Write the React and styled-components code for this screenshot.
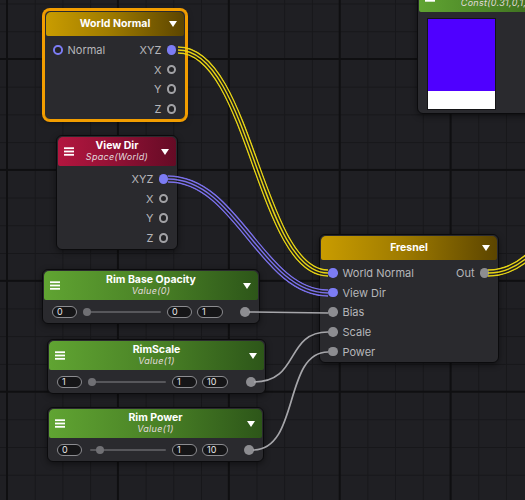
import React from "react";
import styled, { createGlobalStyle, css } from "styled-components";

const GlobalStyle = createGlobalStyle`
  html, body {
    margin: 0;
    padding: 0;
    background: #1f1f23;
  }
  body {
    font-family: Inter, "Noto Sans", sans-serif;
  }
`;

const Canvas = styled.div`
  position: relative;
  width: 525px;
  height: 500px;
  overflow: hidden;
  background-color: #1f1f23;
  background-image: linear-gradient(to right, #0f0f11 2px, transparent 2px),
    linear-gradient(to bottom, #0f0f11 2px, transparent 2px),
    linear-gradient(to right, #17171a 1px, transparent 1px),
    linear-gradient(to bottom, #17171a 1px, transparent 1px);
  background-size: 110.9px 110.9px, 110.9px 110.9px, 27.725px 27.725px,
    27.725px 27.725px;
  background-position: 6px 0, 0 58px, 7px 0, 0 3.5px;
`;

const Node = styled.div`
  position: absolute;
  z-index: 1;
  left: ${(p) => p.$x}px;
  top: ${(p) => p.$y}px;
  width: ${(p) => p.$w}px;
  box-sizing: border-box;
  background: #2a2a2e;
  border: 1px solid ${(p) => (p.$selected ? "#f29d00" : "#0b0b0d")};
  border-radius: 6px;
  box-shadow: ${(p) =>
    p.$selected
      ? "0 0 0 2px #f29d00, 0 2px 6px rgba(0,0,0,0.5)"
      : "0 2px 6px rgba(0,0,0,0.45)"};
`;

const headerTones = {
  gold: "linear-gradient(90deg, #c99c00 0%, #a07c00 45%, #5c4500 100%)",
  crimson: "linear-gradient(90deg, #b3163f 0%, #8f1134 50%, #650b25 100%)",
  green: "linear-gradient(90deg, #60a432 0%, #4a8226 50%, #2d5619 100%)",
};

const Header = styled.div`
  display: grid;
  grid-template-columns: 12px 1fr 12px;
  align-items: center;
  height: ${(p) => (p.$tall ? 29 : 24)}px;
  margin: 1px;
  padding: 0 5px 0 5px;
  border-radius: 5px 5px 2px 2px;
  background: ${(p) => headerTones[p.$tone]};
  color: #ffffff;
`;

const TitleBox = styled.div`
  display: flex;
  flex-direction: column;
  align-items: center;
  line-height: 1.15;
  white-space: nowrap;
`;

const Title = styled.span`
  font-size: 10.5px;
  font-weight: 700;
`;

const Sub = styled.span`
  font-size: 9px;
  font-style: italic;
  color: #e2dadd;
  letter-spacing: 0.3px;
`;

const Arrow = styled.span`
  justify-self: center;
  width: 0;
  height: 0;
  border-left: 4.5px solid transparent;
  border-right: 4.5px solid transparent;
  border-top: 6px solid #ffffff;
`;

const MenuIcon = () => (
  <svg width="10" height="9" viewBox="0 0 10 9" style={{ justifySelf: "center" }}>
    <rect x="0" y="0.3" width="10" height="1.8" fill="#fff" />
    <rect x="0" y="3.6" width="10" height="1.8" fill="#fff" />
    <rect x="0" y="6.9" width="10" height="1.8" fill="#fff" />
  </svg>
);

const Body = styled.div`
  display: flex;
  flex-direction: column;
  padding: ${(p) => p.$pad || "2px 0"};
`;

const Row = styled.div`
  display: flex;
  align-items: center;
  justify-content: space-between;
  height: 19.7px;
  padding: 0 9px 0 8px;
  font-size: 11px;
  color: #b6b6ba;
`;

const Side = styled.div`
  display: flex;
  align-items: center;
  gap: 5px;
  margin-left: ${(p) => (p.$end ? "auto" : 0)};
`;

const portColors = { vec: "#7c7cf4", float: "#8d8d91" };

const Port = styled.span`
  flex: none;
  width: 9.5px;
  height: 9.5px;
  box-sizing: border-box;
  border-radius: 50%;
  ${(p) =>
    p.$open
      ? css`
          border: 2px solid ${p.$kind === "vec" ? portColors.vec : "#a2a2a6"};
          background: #242427;
        `
      : css`
          background: ${portColors[p.$kind]};
        `}
`;

const ValueRow = styled.div`
  display: flex;
  align-items: center;
  height: 22px;
  padding: 0 9.5px 0 9px;
`;

const Field = styled.span`
  flex: none;
  width: ${(p) => p.$w || 25}px;
  height: 12px;
  box-sizing: border-box;
  margin-left: ${(p) => p.$gap || 0}px;
  padding-left: 4px;
  border: 1px solid #8c8c90;
  border-radius: 6px;
  background: #151517;
  color: #e8e8e8;
  font-size: 9px;
  line-height: 10px;
`;

const Slider = styled.span`
  position: relative;
  flex: none;
  width: 78px;
  height: 10px;
  margin: 0 6px;
  &::before {
    content: "";
    position: absolute;
    left: 2px;
    right: 0;
    top: 4px;
    height: 2px;
    background: #57575b;
    border-radius: 1px;
  }
`;

const Knob = styled.span`
  position: absolute;
  top: 1px;
  width: 8px;
  height: 8px;
  border-radius: 50%;
  background: #707074;
`;

const OutPort = styled(Port)`
  margin-left: auto;
  width: 10px;
  height: 10px;
`;

const Swatch = styled.div`
  display: flex;
  flex-direction: column;
  width: 69px;
  height: 92px;
  box-sizing: border-box;
  border: 1px solid #141416;
`;

const SwatchColor = styled.div`
  flex: ${(p) => (p.$h ? "none" : 1)};
  height: ${(p) => (p.$h ? `${p.$h}px` : "auto")};
  background: ${(p) => p.$c};
`;

const WireLayer = styled.svg`
  position: absolute;
  left: 0;
  top: 0;
  z-index: 2;
  pointer-events: none;
`;

const Wire = ({ id, d, color, triple }) =>
  triple ? (
    <g>
      <mask id={id} maskUnits="userSpaceOnUse" x="0" y="0" width="525" height="500">
        <path d={d} fill="none" stroke="#fff" strokeWidth="7.4" />
        <path d={d} fill="none" stroke="#000" strokeWidth="4.6" />
        <path d={d} fill="none" stroke="#fff" strokeWidth="1.4" />
      </mask>
      <path d={d} fill="none" stroke={color} strokeWidth="8" mask={`url(#${id})`} />
    </g>
  ) : (
    <path d={d} fill="none" stroke={color} strokeWidth="1.7" />
  );

const YELLOW = "#e6d314";
const PURPLE = "#7a70ea";
const GRAY = "#a6a6aa";

const wires = [
  { id: "w1", d: "M 178 50 C 250 50, 260 273, 328 273", color: YELLOW, triple: true },
  { id: "w2", d: "M 168 179 C 237 179, 262 293, 328 293", color: PURPLE, triple: true },
  { id: "w3", d: "M 249 312 C 290 312, 290 313, 328 313", color: GRAY },
  { id: "w4", d: "M 254 382 C 300 382, 285 332, 328 332", color: GRAY },
  { id: "w5", d: "M 253 450 C 300 450, 283 352, 328 352", color: GRAY },
  { id: "w6", d: "M 488 273 C 558 273, 570 150, 640 150", color: YELLOW, triple: true },
];

const valueNodes = [
  { title: "Rim Base Opacity", sub: "Value(0)", x: 42, y: 269, w: 218, min: "0", val: "0", max: "1", pct: 0 },
  { title: "RimScale", sub: "Value(1)", x: 47, y: 339, w: 219, min: "1", val: "1", max: "10", pct: 0 },
  { title: "Rim Power", sub: "Value(1)", x: 47, y: 407, w: 217, min: "0", val: "1", max: "10", pct: 0.12 },
];

const ValueNode = ({ node }) => (
  <Node $x={node.x} $y={node.y} $w={node.w}>
    <Header $tone="green" $tall>
      <MenuIcon />
      <TitleBox>
        <Title>{node.title}</Title>
        <Sub>{node.sub}</Sub>
      </TitleBox>
      <Arrow />
    </Header>
    <ValueRow>
      <Field>{node.min}</Field>
      <Slider>
        <Knob style={{ left: `${node.pct * 70}px` }} />
      </Slider>
      <Field>{node.val}</Field>
      <Field $w={26} $gap={5}>
        {node.max}
      </Field>
      <OutPort $kind="float" />
    </ValueRow>
  </Node>
);

const App = () => {
  return (
    <Canvas>
      <GlobalStyle />

      {/* constant color node, cut off at the top */}
      <Node $x={417} $y={-19} $w={160}>
        <Header $tone="green" $tall>
          <MenuIcon />
          <TitleBox>
            <Title>Color</Title>
            <Sub>Const(0.31,0,1,1)</Sub>
          </TitleBox>
          <Arrow />
        </Header>
        <Body $pad="5px 0 3px 9px">
          <Swatch>
            <SwatchColor $c="#4f00ff" />
            <SwatchColor $c="#ffffff" $h={18} />
          </Swatch>
        </Body>
      </Node>

      <Node $x={44} $y={10} $w={142} $selected>
        <Header $tone="gold">
          <span />
          <TitleBox>
            <Title>World Normal</Title>
          </TitleBox>
          <Arrow />
        </Header>
        <Body $pad="3px 0 0">
          <Row>
            <Side>
              <Port $kind="vec" $open />
              Normal
            </Side>
            <Side>
              XYZ
              <Port $kind="vec" />
            </Side>
          </Row>
          {["X", "Y", "Z"].map((c) => (
            <Row key={c}>
              <Side $end>
                {c}
                <Port $kind="float" $open />
              </Side>
            </Row>
          ))}
        </Body>
      </Node>

      <Node $x={56} $y={135} $w={122}>
        <Header $tone="crimson" $tall>
          <MenuIcon />
          <TitleBox>
            <Title>View Dir</Title>
            <Sub>Space(World)</Sub>
          </TitleBox>
          <Arrow />
        </Header>
        <Body $pad="2px 0 1px">
          <Row>
            <Side $end>
              XYZ
              <Port $kind="vec" />
            </Side>
          </Row>
          {["X", "Y", "Z"].map((c) => (
            <Row key={c}>
              <Side $end>
                {c}
                <Port $kind="float" $open />
              </Side>
            </Row>
          ))}
        </Body>
      </Node>

      {valueNodes.map((n) => (
        <ValueNode key={n.title} node={n} />
      ))}

      <Node $x={319} $y={234} $w={180}>
        <Header $tone="gold">
          <span />
          <TitleBox>
            <Title>Fresnel</Title>
          </TitleBox>
          <Arrow />
        </Header>
        <Body $pad="2px 0 1px">
          <Row>
            <Side>
              <Port $kind="vec" />
              World Normal
            </Side>
            <Side>
              Out
              <Port $kind="float" />
            </Side>
          </Row>
          <Row>
            <Side>
              <Port $kind="vec" />
              View Dir
            </Side>
          </Row>
          {["Bias", "Scale", "Power"].map((l) => (
            <Row key={l}>
              <Side>
                <Port $kind="float" />
                {l}
              </Side>
            </Row>
          ))}
        </Body>
      </Node>

      <WireLayer width="525" height="500" viewBox="0 0 525 500">
        {wires.map((w) => (
          <Wire key={w.id} {...w} />
        ))}
      </WireLayer>
    </Canvas>
  );
};

export default App;
